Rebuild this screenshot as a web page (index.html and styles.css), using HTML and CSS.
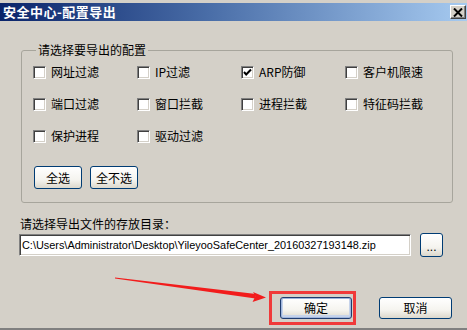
FILE: index.html
```html
<!DOCTYPE html>
<html>
<head>
<meta charset="utf-8">
<link rel="stylesheet" href="styles.css">
</head>
<body>
<div class="window">
  <div class="titlebar">
    <span class="title">安全中心-配置导出</span>
    <span class="close">
      <svg width="10" height="9" viewBox="0 0 10 9"><path d="M1 0.5 L9 8.5 M9 0.5 L1 8.5" stroke="#000" stroke-width="2"/></svg>
    </span>
  </div>
  <fieldset class="group">
    <legend>请选择要导出的配置</legend>
    <div class="options">
      <label class="opt"><span class="cb"></span>网址过滤</label>
      <label class="opt"><span class="cb"></span>IP过滤</label>
      <label class="opt"><span class="cb"><svg width="9" height="9" viewBox="0 0 9 9"><path d="M1 4 L3.2 6.5 L8 1.5" fill="none" stroke="#000" stroke-width="2"/></svg></span>ARP防御</label>
      <label class="opt"><span class="cb"></span>客户机限速</label>
      <label class="opt"><span class="cb"></span>端口过滤</label>
      <label class="opt"><span class="cb"></span>窗口拦截</label>
      <label class="opt"><span class="cb"></span>进程拦截</label>
      <label class="opt"><span class="cb"></span>特征码拦截</label>
      <label class="opt"><span class="cb"></span>保护进程</label>
      <label class="opt"><span class="cb"></span>驱动过滤</label>
    </div>
    <div class="sel-buttons">
      <button class="btn small">全选</button>
      <button class="btn small">全不选</button>
    </div>
  </fieldset>
  <div class="dir-label">请选择导出文件的存放目录：</div>
  <div class="path-row">
    <div class="path-input">C:\Users\Administrator\Desktop\YileyooSafeCenter_20160327193148.zip</div>
    <button class="btn browse">...</button>
  </div>
  <div class="actions">
    <span class="highlight"><button class="btn action default">确定</button></span>
    <button class="btn action">取消</button>
  </div>
  <svg class="arrow" width="467" height="330" viewBox="0 0 467 330">
    <polygon points="115,277.6 256,294 255.4,298.6 115,278.4" fill="#f21c1c"/>
    <polygon points="266,297.5 253,292 255.5,296 252.5,302" fill="#f21c1c"/>
  </svg>
</div>
</body>
</html>
```

FILE: styles.css
```css
* { box-sizing: border-box; }
html, body { margin: 0; padding: 0; }
body {
  width: 467px;
  height: 330px;
  background: #d4d0c8;
  font-family: "Noto Sans CJK SC", "Liberation Sans", sans-serif;
  font-size: 12px;
  color: #000;
  overflow: hidden;
}
.window {
  position: relative;
  width: 467px;
  height: 330px;
  padding-top: 3px;
  border-bottom: 2px solid #808080;
  display: flex;
  flex-direction: column;
}
.titlebar {
  height: 18px;
  background: linear-gradient(to right, #0a246a 0%, #4a6ea8 45%, #a6caf0 100%);
  display: flex;
  align-items: center;
  justify-content: space-between;
  padding-left: 3px;
  padding-right: 1px;
}
.title {
  color: #fff;
  font-weight: bold;
  font-size: 13px;
  line-height: 16px;
  letter-spacing: 0.5px;
}
.close {
  width: 16px;
  height: 14px;
  background: #d4d0c8;
  border-top: 1px solid #fff;
  border-left: 1px solid #fff;
  border-right: 1px solid #404040;
  border-bottom: 1px solid #404040;
  box-shadow: inset -1px -1px 0 #808080;
  display: flex;
  align-items: center;
  justify-content: center;
}
.close svg { display: block; }
.group {
  margin: 23px 14px 0 21px;
  padding: 0 0 13px 11px;
  border: 1px solid #a7a59c;
  border-radius: 3px;
  min-width: 0;
}
.group legend {
  padding: 0 2px;
  margin-left: 3px;
  line-height: 12px;
  font-size: 12px;
}
.options {
  display: grid;
  grid-template-columns: repeat(4, 104px);
  grid-auto-rows: 32px;
}
.opt {
  display: flex;
  align-items: center;
  gap: 4px;
  line-height: 14px;
}
.cb {
  width: 13px;
  height: 13px;
  flex: none;
  background: #fff;
  border-top: 1px solid #808080;
  border-left: 1px solid #808080;
  border-right: 1px solid #fff;
  border-bottom: 1px solid #fff;
  box-shadow: inset 1px 1px 0 #404040, inset -1px -1px 0 #d4d0c8;
  display: flex;
  align-items: center;
  justify-content: center;
  margin-right: 1px;
}
.cb svg { display: block; }
.sel-buttons {
  display: flex;
  gap: 8px;
  margin-top: 14px;
  margin-left: 1px;
}
.btn {
  font-family: "Noto Sans CJK SC", "Liberation Sans", sans-serif;
  font-size: 12px;
  color: #000;
  border: 1px solid #003c74;
  border-radius: 3px;
  background: linear-gradient(to bottom, #ffffff 0%, #f5f4ef 60%, #dcd8cc 100%);
  padding: 0;
  line-height: 14px;
  display: flex;
  align-items: center;
  justify-content: center;
}
.btn.small { width: 48px; height: 23px; }
.dir-label {
  margin: 13px 0 0 20px;
  line-height: 16px;
}
.path-row {
  display: flex;
  align-items: center;
  gap: 9px;
  margin: 1px 0 0 19px;
}
.path-input {
  width: 392px;
  height: 22px;
  background: #fff;
  border-top: 1px solid #808080;
  border-left: 1px solid #808080;
  border-right: 1px solid #fff;
  border-bottom: 1px solid #fff;
  box-shadow: inset 1px 1px 0 #404040, inset -1px -1px 0 #d4d0c8;
  font-family: "Liberation Sans", sans-serif;
  font-size: 10.9px;
  line-height: 20px;
  padding-left: 2px;
  white-space: nowrap;
  overflow: hidden;
}
.btn.browse {
  width: 23px;
  height: 24px;
  font-family: "Liberation Sans", sans-serif;
  font-size: 12px;
  padding-top: 3px;
  color: #000;
}
.actions {
  display: flex;
  align-items: center;
  justify-content: flex-end;
  gap: 23px;
  margin: 34px 15px 0 0;
}
.highlight {
  display: flex;
  border: 3px solid #f03a3a;
  padding: 3px 1px 3px 8px;
}
.btn.action { width: 73px; height: 22px; }
.btn.default {
  border-color: #1f3c70;
  box-shadow: inset 0 0 0 1px #9fb6dd, inset 0 -1px 0 2px #c6d3ea;
  width: 72px;
}
.arrow {
  position: absolute;
  left: 0;
  top: 0;
  pointer-events: none;
}
```
